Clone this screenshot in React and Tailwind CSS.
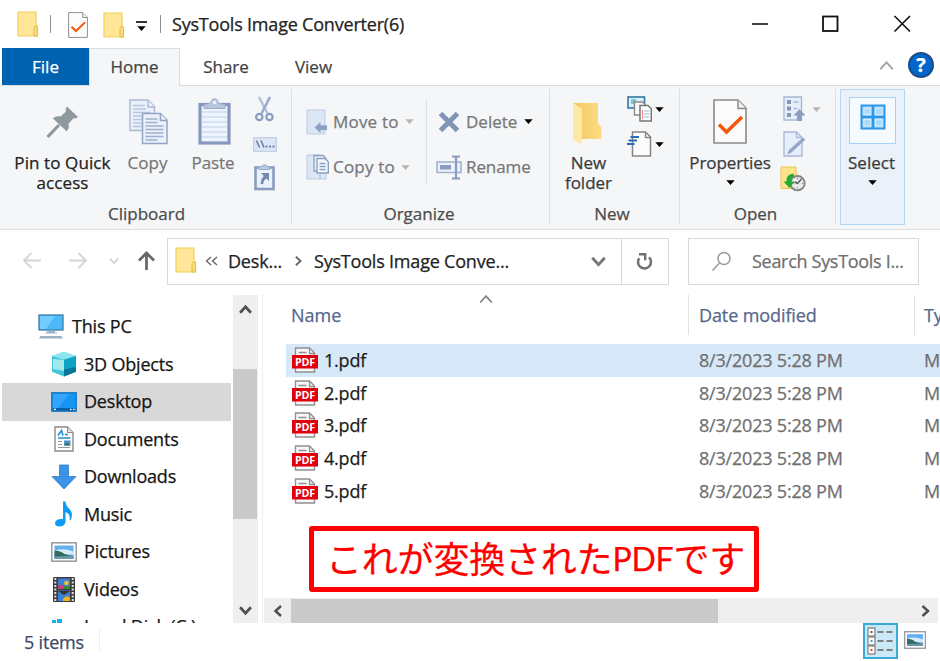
import React from "react";
import clsx from "clsx";

const FolderIcon = ({ className }) => (
    <svg className={clsx("shrink-0", className)} width="22" height="26" viewBox="0 0 22 26">
        <path d="M1 1h18v14h1.500v10H1z" fill="#ffe699" stroke="#f0cd5c" strokeWidth="1.200" />
        <path d="M17 25v-8.500q0-1.500 1.700-1.500t1.800 1.500V25z" fill="#fbdc7c" stroke="#e6bd45" />
    </svg>
);

const CheckPage = ({ className, width, height }) => (
    <svg className={clsx("shrink-0", className)} width={width} height={height} viewBox="0 0 34 45" preserveAspectRatio="none">
        <path d="M1 1h24l8 8v35H1z" fill="#fbfbfb" stroke="#8a8a8a" strokeWidth="1.600" />
        <path d="M25 1v8.500h8" fill="#eee" stroke="#8a8a8a" strokeWidth="1.500" />
        <path d="M6 25.500l7.500 7.500L29 18" fill="none" stroke="#f4560d" strokeWidth="3.400" />
    </svg>
);

const Triangle = ({ className, color = "#000" }) => (
    <svg className={clsx("shrink-0", className)} width="9" height="5" viewBox="0 0 9 5">
        <path d="M.3.300h8.400L4.500 4.900z" fill={color} />
    </svg>
);

const Chevron = ({ dir = "down", color = "#555", width = 2.5, size = 12, className }) => {
    const paths = {
        down: "M1 3l5 5.500L11 3",
        up: "M1 9l5-5.500L11 9",
        left: "M9 1L3.500 6 9 11",
        right: "M3.500 1L9 6l-5.500 5",
    };
    return (
        <svg className={clsx("shrink-0", className)} width={size} height={size} viewBox="0 0 12 12">
            <path d={paths[dir]} fill="none" stroke={color} strokeWidth={width} />
        </svg>
    );
};

const PinIcon = () => (
    <svg width="33" height="33" viewBox="0 0 33 33">
        <path d="M21 .5L32 11l-2.500 1.500-2-.3-5 5.500c.8 3 .2 5.500-2 7.500L7 12.500c2-2 4.500-2.500 7.500-2l5.500-5-.5-2.500z" fill="#8e999e" />
        <path d="M13 19L1.500 31" stroke="#8e999e" strokeWidth="3.200" />
    </svg>
);

const CopyIcon = () => (
    <svg width="39" height="46" viewBox="0 0 39 46">
        <g fill="#eaf1fb" stroke="#a9b8d4" strokeWidth="1.400">
            <path d="M1 1h18l6.500 6.500V31.500H1z" />
            <path d="M19 1v7h6.500" />
        </g>
        <path d="M4 6.500h12M4 10h13M4 13.500h18M4 17h10M4 20.500h9M4 24h9M4 27.500h9" stroke="#b9c8e0" strokeWidth="1.400" />
        <g fill="#eaf1fb" stroke="#94a5c5" strokeWidth="1.500">
            <path d="M13.500 14.500h18l6.500 6.500v23.500H13.500z" />
            <path d="M31.500 14.500V21.500H38" />
        </g>
        <path d="M16.500 20h12M16.500 23.500h12M16.500 27h18M16.500 30.500h18M16.500 34h18M16.500 37.500h18M16.500 41h12" stroke="#9fb0cd" strokeWidth="1.500" />
    </svg>
);

const PasteIcon = () => (
    <svg width="33" height="47" viewBox="0 0 33 47">
        <rect x="2" y="6.500" width="29" height="38.500" fill="#eef4fd" stroke="#8597ba" strokeWidth="3.200" />
        <path d="M4 14h25M4 19h25M4 24h25M4 29h25M4 34h25M4 39h25" stroke="#cfdcf0" strokeWidth="1.500" />
        <path d="M6 10.500V6.500q7-.5 7.500-4Q14 .8 16.500.8t3 1.700q.5 3.500 7.500 4v4z" fill="#b7c5dd" stroke="#9badca" />
        <circle cx="16.500" cy="4.500" r="1.800" fill="#eef4fd" />
    </svg>
);

const ScissorsIcon = () => (
    <svg width="19" height="26" viewBox="0 0 19 26">
        <path d="M4 1l8.500 16.500" stroke="#b4c3dc" strokeWidth="2.600" />
        <path d="M15 1L6.500 17.500" stroke="#9aabc9" strokeWidth="2.600" />
        <circle cx="4.300" cy="21" r="3.200" fill="none" stroke="#8b9dbf" strokeWidth="2.200" />
        <circle cx="14.500" cy="21" r="3.200" fill="none" stroke="#8b9dbf" strokeWidth="2.200" />
    </svg>
);

const CopyPathIcon = () => (
    <svg width="24" height="15" viewBox="0 0 24 15">
        <rect x=".7" y=".7" width="22.600" height="13.600" fill="#dbe6f6" stroke="#b9c8e0" />
        <path d="M3.500 3.500l3 7M8 3.500l3 7" stroke="#6d81a8" strokeWidth="1.600" />
        <path d="M12.500 9.500h2M16 9.500h2M19.500 9.500h2" stroke="#6d81a8" strokeWidth="2" />
    </svg>
);

const ShortcutIcon = () => (
    <svg width="21" height="27" viewBox="0 0 21 27">
        <rect x="1.500" y="3.500" width="18" height="21.500" fill="#eaf1fb" stroke="#8a9cbf" strokeWidth="2.600" />
        <path d="M5 5.500V2.500h3l1-1.500h3l1 1.500h3v3z" fill="#b9c7df" stroke="#9aabc9" />
        <path d="M7 9h8v8l-2.600-2.500q-3 1.500-3.200 5.500H6.700q0-5 3.100-8z" fill="#7488b0" />
    </svg>
);

const MoveToIcon = () => (
    <svg width="22" height="26" viewBox="0 0 22 26">
        <path d="M1 1h18v24H1z" fill="#dce7f6" stroke="#bccbe3" />
        <path d="M16 18h4v7h-4z" fill="#cfdcf0" />
        <path d="M8.500 18.500l6-5.500v3.300H21v4.600h-6.500V24z" fill="#8ea0c2" />
    </svg>
);

const CopyToIcon = () => (
    <svg width="24" height="26" viewBox="0 0 24 26">
        <path d="M1 1h13v24H1zM14 19h6v6h-6z" fill="#dce7f6" stroke="#bccbe3" />
        <path d="M8 1.500h9l3 3V17H8z" fill="#eaf1fb" stroke="#8ea0c2" strokeWidth="1.300" />
        <path d="M11 4.500h8l3.300 3.300V19H11z" fill="#f2f6fd" stroke="#8ea0c2" strokeWidth="1.400" />
        <path d="M13.500 9.500h6M13.500 12.500h6M13.500 15.500h6" stroke="#8ea0c2" strokeWidth="1.300" />
    </svg>
);

const DeleteIcon = () => (
    <svg width="22" height="22" viewBox="0 0 22 22">
        <path d="M2.500 2.500l17 17M19.500 2.500l-17 17" stroke="#8194b8" strokeWidth="5" />
    </svg>
);

const RenameIcon = () => (
    <svg width="26" height="25" viewBox="0 0 26 25">
        <rect x="1" y="7" width="24" height="10.500" fill="#eaf1fb" stroke="#9fb0cd" strokeWidth="1.500" />
        <rect x="4" y="10" width="11" height="4.500" fill="#8a9cbf" />
        <path d="M20 2v21M16 1.500h8M16 23.500h8" stroke="#8a9cbf" strokeWidth="2.200" />
    </svg>
);

const NewFolderIcon = () => (
    <svg width="30" height="43" viewBox="0 0 30 43">
        <defs>
            <linearGradient id="nf" x1="0" x2="1">
                <stop offset="0" stopColor="#eec75c" />
                <stop offset="1" stopColor="#ffdd85" />
            </linearGradient>
        </defs>
        <path d="M0 1h25v20.500l3.500 4V37H8z" fill="url(#nf)" />
        <path d="M0 1l9 5.500v32L7.500 42.500 0 37z" fill="#ffe7a4" />
    </svg>
);

const NewItemIcon = () => (
    <svg width="25" height="26" viewBox="0 0 25 26">
        <rect x="1" y="1" width="16.500" height="11" fill="#d9f1fa" stroke="#3a80a8" strokeWidth="1.700" />
        <path d="M4 3h5v5H4z" fill="#7cc3d6" />
        <path d="M7.500 6h8l3 3v10h-11z" fill="#fafafa" stroke="#8a8a8a" strokeWidth="1.400" />
        <path d="M13 9.500h8l3.300 3.300V25H13z" fill="#fff" stroke="#777" strokeWidth="1.500" />
        <path d="M15.500 14v9" stroke="#f08080" />
        <path d="M17 15h5.500M17 18h5.500M17 21h5.500" stroke="#9db9d9" />
    </svg>
);

const EasyAccessIcon = () => (
    <svg width="25" height="26" viewBox="0 0 25 26">
        <path d="M5.500 1h13l5 5v19h-18z" fill="#fbfbfb" stroke="#858585" strokeWidth="1.500" />
        <path d="M18.500 1v5.500h5" fill="none" stroke="#858585" strokeWidth="1.400" />
        <path d="M3.500 6h8.500M1.500 9.500h8.500M0 13h7.500" stroke="#2a6cb4" strokeWidth="2.100" />
    </svg>
);

const OpenIcon = () => (
    <svg width="23" height="26" viewBox="0 0 23 26">
        <path d="M1 1h17.500v23H1z" fill="#e6eefa" stroke="#a9b8d4" strokeWidth="1.300" />
        <path d="M4 4h4v4H4zM4 10.500h4v4H4zM4 17h4v4H4z" fill="#8597ba" />
        <path d="M10.500 6h5M10.500 12.500h4" stroke="#a9b8d4" strokeWidth="1.500" />
        <path d="M16.500 13l6 6.500h-3.500V25h-5v-5.500h-3.500z" fill="#8b9dc0" />
    </svg>
);

const EditIcon = () => (
    <svg width="23" height="26" viewBox="0 0 23 26">
        <path d="M1 1h12.500l5.500 5.500V25H1z" fill="#e6eefa" stroke="#a9b8d4" strokeWidth="1.300" />
        <path d="M13.500 1v5.500H19" fill="none" stroke="#a9b8d4" strokeWidth="1.300" />
        <path d="M4 23.500l2-4.500L20 6.500l2.500 2L8.500 21.500z" fill="#94a6c8" />
    </svg>
);

const HistoryIcon = () => (
    <svg width="26" height="26" viewBox="0 0 26 26">
        <path d="M1 1h15v6h1v15.500H1z" fill="#ffe48d" stroke="#eac64f" />
        <circle cx="17.500" cy="17.200" r="7.200" fill="#e9e9e9" stroke="#858585" strokeWidth="1.900" />
        <path d="M21.500 13L17.500 17.500 14.500 16" fill="none" stroke="#555" strokeWidth="1.400" />
        <path d="M17.500 12v1M17.500 21.500v1M22 17.500h1M12.500 17.500h1" stroke="#777" />
        <path d="M13.500 7.500Q5.500 8.500 6.500 15.500H3.500L9.500 22l5-6.500h-3.300q0-4.500 3-5z" fill="#21a835" />
    </svg>
);

const SelectIcon = () => (
    <svg width="26" height="26" viewBox="0 0 26 26">
        <rect x="1.500" y="1.500" width="23" height="23" fill="#a9dbfb" stroke="#2f96e8" strokeWidth="2" />
        <path d="M13 1v24M1 13h24" stroke="#2f96e8" strokeWidth="2.600" />
        <path d="M4 4h6.500v6.500H4zM15.500 4H22v6.500h-6.500zM4 15.500h6.500V22H4zM15.500 15.500H22V22h-6.500z" fill="none" stroke="#d4eefe" />
    </svg>
);

const Arrow = ({ dir, color }) => {
    const paths = {
        left: "M19 9.500H2M9.500 2L2 9.500 9.500 17",
        right: "M1 9.500h17M10.500 2l7.500 7.500-7.500 7.500",
        up: "M9.500 19V2M2 9.500L9.500 2 17 9.500",
    };
    return (
        <svg className="shrink-0" width="20" height="20" viewBox="0 0 20 20">
            <path d={paths[dir]} fill="none" stroke={color} strokeWidth={dir === "up" ? 2.700 : 1.900} />
        </svg>
    );
};

const PcIcon = () => (
    <svg width="26" height="25" viewBox="0 0 26 25">
        <rect x="1" y="1" width="24" height="15" fill="#4db8fa" stroke="#3b7ea8" strokeWidth="1.300" />
        <path d="M2 2h15L8 15H2z" fill="#74cbff" />
        <path d="M9 17h8v1.500h2v1H7v-1h2z" fill="#9db4c6" />
        <path d="M2.500 22h21l1.500 2.500H1z" fill="#9fb1c6" />
    </svg>
);

const CubeIcon = () => (
    <svg width="26" height="26" viewBox="0 0 26 26">
        <path d="M13 .5l12 4.300L13 8.500 1 4.800z" fill="#8ce5ef" />
        <path d="M1 4.800l12 3.700v17L1 20.800z" fill="#43c7d6" />
        <path d="M2 8l11 1v11L2 18z" fill="#c4f3f5" opacity=".75" />
        <path d="M25 4.800L13 8.500v17l12-4.700z" fill="#0ea3c5" />
        <path d="M25 16L13 18.500v7l12-4.700z" fill="#087698" />
    </svg>
);

const DesktopIcon = () => (
    <svg width="26" height="20" viewBox="0 0 26 20">
        <rect x=".8" y=".8" width="24.400" height="18.400" fill="#1795f5" stroke="#1273bb" strokeWidth="1.300" />
        <path d="M2 2h16L7 16H2z" fill="#34a5fb" />
        <path d="M2 17.300h22" stroke="#0c5795" strokeWidth="2.200" />
        <path d="M3 17.300h2M19 17.300h1.500M22 17.300h1.500" stroke="#fff" strokeWidth="1.300" />
    </svg>
);

const DocumentIcon = () => (
    <svg width="20" height="26" viewBox="0 0 20 26">
        <path d="M1 1h12.500L19 6.500V25H1z" fill="#fdfdfd" stroke="#8b8b8b" strokeWidth="1.400" />
        <path d="M13.500 1v5.500H19" fill="#ddd" stroke="#8b8b8b" />
        <path d="M4 9.500l3.500-5 1.500 5M11 8.500h3M4 12h12.500" fill="none" stroke="#1e8fdc" strokeWidth="1.600" />
        <path d="M4 15.500h4M4 18.500h4M4 21.500h12" stroke="#999" strokeWidth="1.200" />
        <path d="M10 14.500h6.500v5H10z" fill="#4c8fd0" />
        <path d="M10 19.500l3-3 3.500 3z" fill="#34734b" />
    </svg>
);

const DownloadIcon = () => (
    <svg width="26" height="26" viewBox="0 0 26 26">
        <path d="M8.500 1h9v11.500H25L13 25 1 12.500h7.500z" fill="#3c93e5" stroke="#2c7cc9" strokeWidth=".8" />
    </svg>
);

const MusicIcon = () => (
    <svg width="20" height="26" viewBox="0 0 20 26">
        <path d="M9 .5h2.500Q12 5 15.500 8q4 4 1.500 10.500l-1.500 1q1.500-6.500-4-8.500v9.500q-.5 4.500-5.500 5-5 0-5-3.500 .5-4.500 8-4z" fill="#0c9bf5" />
    </svg>
);

const PictureIcon = ({ width = 26, height = 20 }) => (
    <svg className="shrink-0" width={width} height={height} viewBox="0 0 26 20" preserveAspectRatio="none">
        <rect x=".8" y=".8" width="24.400" height="18.400" fill="#fff" stroke="#999" strokeWidth="1.500" />
        <path d="M3.500 3.500h19v13h-19z" fill="#64b0f2" />
        <path d="M3.500 8.500q9-3 19 1v3h-19z" fill="#d5edfb" />
        <path d="M3.500 8.500q6 0 10 3.500l9 2.500v2h-19z" fill="#356b5e" />
        <path d="M3.500 14.500l19-.5v2.500h-19z" fill="#6f97b0" />
    </svg>
);

const VideoIcon = () => (
    <svg width="22" height="25" viewBox="0 0 22 25">
        <rect width="22" height="25" rx="1" fill="#3c3c3c" />
        <path d="M2.300 1v23M19.700 1v23" stroke="#e2e2e2" strokeWidth="2" strokeDasharray="2 1.500" />
        <path d="M5 1.500h12v10.500H5zM5 13.500h12V24H5z" fill="#3b7fd9" />
        <path d="M5 9q4-3 6 0v3H5z" fill="#c6407d" />
        <circle cx="13.500" cy="6" r="2.300" fill="#f5c518" />
        <path d="M10.500 9h6.500v3h-6.500z" fill="#2f8a35" />
        <path d="M10 22q3.500-5 7-1v3h-7z" fill="#f0b51c" />
        <path d="M5 14h12l-6 4z" fill="#34322b" />
    </svg>
);

const DiskIcon = () => (
    <svg width="26" height="26" viewBox="0 0 26 26">
        <path d="M1 6h4v4H1zM6 5h5v5H6z" fill="#12aef0" />
        <rect x="1" y="13" width="24" height="8" fill="#b5b5b5" />
    </svg>
);

const PdfIcon = () => (
    <svg className="mb-px shrink-0" width="26" height="26" viewBox="0 0 26 26">
        <path d="M3.500 1h14l5 5v19h-19z" fill="#f7f7f7" stroke="#909090" strokeWidth="1.400" />
        <path d="M17.500 1v5.500h5M6.500 5.500h8" fill="none" stroke="#909090" strokeWidth="1.300" />
        <rect x="0" y="8" width="26" height="13.500" fill="#e2000f" />
        <text x="13" y="18.800" textAnchor="middle" fontSize="11" fontWeight="700" fontFamily="Open Sans, sans-serif" fill="#fff" textLength="20" lengthAdjust="spacingAndGlyphs">PDF</text>
    </svg>
);

const DetailsIcon = () => (
    <svg width="27" height="28" viewBox="0 0 27 28">
        <path d="M1 1h7v8H1zM1 10h7v8H1zM1 19h7v8H1z" fill="#fff" stroke="#8f8f8f" strokeWidth="1.400" />
        <path d="M3.500 5h2" stroke="#555" strokeWidth="2" />
        <path d="M3.500 14h2" stroke="#3d9be0" strokeWidth="2" />
        <path d="M3.500 23h2" stroke="#e2402f" strokeWidth="2" />
        <path d="M10.500 5h6M19.500 5h6M10.500 14h6M19.500 14h6M10.500 23h6M19.500 23h6" stroke="#808080" strokeWidth="2" />
    </svg>
);

const sidebarItems = [
    { label: "3D Objects", icon: <CubeIcon /> },
    { label: "Desktop", icon: <DesktopIcon />, active: true },
    { label: "Documents", icon: <DocumentIcon /> },
    { label: "Downloads", icon: <DownloadIcon /> },
    { label: "Music", icon: <MusicIcon /> },
    { label: "Pictures", icon: <PictureIcon /> },
    { label: "Videos", icon: <VideoIcon /> },
    { label: "Local Disk (C:)", icon: <DiskIcon /> },
];

const files = ["1.pdf", "2.pdf", "3.pdf", "4.pdf", "5.pdf"];

const TitleBar = () => (
    <div className="flex h-12 items-center pl-[17px]">
        <FolderIcon />
        <div className="ml-[11px] h-[18px] w-px bg-[#8f8f8f]" />
        <CheckPage width={20} height={26} className="ml-[17px] mt-0.5" />
        <FolderIcon className="ml-[15px] mt-0.5" />
        <div className="ml-[11px] mt-1 flex flex-col items-center gap-[3px]">
            <div className="h-[2px] w-[11px] bg-[#333]" />
            <Triangle />
        </div>
        <div className="ml-[13px] h-[18px] w-px bg-[#8f8f8f]" />
        <h1 className="ml-[11px] text-[18px] tracking-[-0.2px] text-[#222]">SysTools Image Converter(6)</h1>
        <svg className="ml-auto mr-[29px]" width="160" height="18" viewBox="0 0 160 18">
            <path d="M1 9h16" stroke="#111" strokeWidth="1.600" />
            <rect x="72" y="1.500" width="14.500" height="14.500" fill="none" stroke="#111" strokeWidth="1.800" />
            <path d="M143.500 1l15.500 15.500M159 1l-15.500 15.500" stroke="#111" strokeWidth="1.600" />
        </svg>
    </div>
);

const Tabs = () => (
    <div className="flex h-[37px] items-stretch pl-[2px] text-[17px] leading-[38px] text-[#444]">
        <div className="w-[87px] bg-[#0063b1] text-center text-white">File</div>
        <div className="z-10 -mb-px w-[91px] border border-b-0 border-[#dcdde0] bg-[#f5f6f8] text-center leading-[36px]">Home</div>
        <div className="w-[92px] text-center">Share</div>
        <div className="w-[83px] text-center">View</div>
        <div className="mb-[3px] ml-auto mr-[6px] flex items-center">
            <Chevron dir="up" color="#a5a5a5" width={1.5} size={15} className="mr-[14px]" />
            <div className="flex h-[26px] w-[26px] items-center justify-center rounded-full border-2 border-[#1a4b86] bg-[#0066cc] text-[20px] font-bold leading-none text-white">?</div>
        </div>
    </div>
);

const Group = ({ name, className, children }) => (
    <div className={clsx("flex h-[135px] shrink-0 flex-col border-r border-[#dfe0e3]", className)}>
        <div className="flex h-[115px]">{children}</div>
        <div className="text-center leading-5 text-[#4b4b4b]">{name}</div>
    </div>
);

const Ribbon = () => (
    <div className="flex h-[145px] border-y border-[#dcdde0] bg-[#f5f6f8] pl-[2px] pt-[3px] text-[17px] leading-5 text-[#3b3b3b]">
        <Group name="Clipboard" className="w-[290px]">
            <div className="flex w-[121px] flex-col items-center text-center tracking-[0.1px] text-[#222]">
                <div className="mt-[17px] h-[47px]"><PinIcon /></div>
                Pin to Quick<br />access
            </div>
            <div className="flex w-[49px] flex-col items-center text-[#777]">
                <div className="mt-[10px] h-[54px] pl-[2px]"><CopyIcon /></div>
                Copy
            </div>
            <div className="ml-[16px] flex w-[50px] flex-col items-center text-[#777]">
                <div className="mt-[9px] h-[55px] pl-[2px]"><PasteIcon /></div>
                <span className="tracking-[-0.1px]">Paste</span>
            </div>
            <div className="ml-[14px] mt-[7px] flex w-[25px] flex-col items-center">
                <div className="h-[41px]"><ScissorsIcon /></div>
                <div className="h-[27px]"><CopyPathIcon /></div>
                <ShortcutIcon />
            </div>
        </Group>
        <Group name={<span className="mr-[3px]">Organize</span>} className="w-[258px]">
            <div className="mt-[10px] flex h-[86px] w-[135px] flex-col border-r border-[#dfe0e3] pl-[14px] text-[#777]">
                <div className="flex h-[45px] shrink-0 items-center">
                    <MoveToIcon /><span className="ml-[5px] tracking-[0.2px]">Move to</span>
                    <Triangle color="#b5b5b5" className="ml-[6px]" />
                </div>
                <div className="flex h-[46px] shrink-0 items-center">
                    <CopyToIcon /><span className="ml-[3px] tracking-[0.2px]">Copy to</span>
                    <Triangle color="#b5b5b5" className="ml-[6px]" />
                </div>
            </div>
            <div className="mt-[10px] pl-[9px] text-[#777]">
                <div className="flex h-[45px] items-center">
                    <div className="w-[30px] pl-[2px]"><DeleteIcon /></div>
                    <span>Delete</span>
                    <Triangle className="ml-[7px]" />
                </div>
                <div className="flex h-[46px] items-center">
                    <div className="w-[30px]"><RenameIcon /></div>
                    <span className="tracking-[-0.1px]">Rename</span>
                </div>
            </div>
        </Group>
        <Group name={<span className="mr-[5px]">New</span>} className="w-[130px]">
            <div className="flex w-[77px] flex-col items-center text-center">
                <div className="mt-[13px] h-[51px] pr-[2px]"><NewFolderIcon /></div>
                New<br />folder
            </div>
            <div className="mt-[7px] flex flex-col gap-[9px]">
                <div className="flex items-center gap-[3px]"><NewItemIcon /><Triangle /></div>
                <div className="flex items-center gap-[3px]"><EasyAccessIcon /><Triangle /></div>
            </div>
        </Group>
        <Group name={<span className="mr-[4px]">Open</span>} className="w-[156px]">
            <div className="flex w-[100px] flex-col items-center">
                <div className="mt-[10px] h-[54px]"><CheckPage width={34} height={45} /></div>
                <span className="tracking-[-0.1px]">Properties</span>
                <Triangle className="mt-[7px]" />
            </div>
            <div className="mt-[7px] flex flex-col gap-[9px]">
                <div className="flex items-center gap-[6px] pl-[3px]"><OpenIcon /><Triangle color="#b5b5b5" /></div>
                <div className="pl-[3px]"><EditIcon /></div>
                <HistoryIcon />
            </div>
        </Group>
        <div className="ml-[4px] flex h-[136px] w-[65px] flex-col items-center border border-[#b3d8f5] bg-[#eaf1f8]">
            <div className="mt-[7px] flex h-[47px] w-[47px] items-center justify-center border border-[#a8d2f5] bg-[#f5faff] pb-[8px]"><SelectIcon /></div>
            <span className="mr-[2px] mt-[9px]">Select</span>
            <Triangle className="mr-[1px] mt-[7px]" />
        </div>
    </div>
);

const AddressBar = () => (
    <div className="flex h-[65px] items-center pb-[3px] pl-[22px] text-[18px] tracking-[-0.2px] text-[#222]">
        <Arrow dir="left" color="#d5d5d5" />
        <div className="w-[26px]" />
        <Arrow dir="right" color="#d5d5d5" />
        <Chevron color="#cfcfcf" width={2} size={10} className="ml-[21px]" />
        <div className="w-[18px]" />
        <Arrow dir="up" color="#666" />
        <div className="ml-[10px] flex h-[47px] w-[502px] items-center border border-[#d9d9d9]">
            <FolderIcon className="mb-[3px] ml-[7px]" />
            <svg className="ml-[8px]" width="13" height="10" viewBox="0 0 13 10">
                <path d="M6 1L1.500 5 6 9M12 1L7.500 5 12 9" fill="none" stroke="#666" strokeWidth="1.400" />
            </svg>
            <span className="ml-[10px]">Desk...</span>
            <Chevron dir="right" color="#666" width={2.3} size={10} className="ml-[11px]" />
            <span className="ml-[11px]">SysTools Image Conve...</span>
            <Chevron color="#777" width={2.3} size={15} className="ml-auto mr-[15px]" />
            <div className="flex h-full w-[47px] items-center justify-center border-l border-[#d9d9d9]">
                <svg width="18" height="19" viewBox="0 0 18 19">
                    <path d="M3.200 6.200A6.500 6.500 0 1 0 13 5.300" fill="none" stroke="#707070" strokeWidth="2.500" />
                    <path d="M3 2.200h6.200v6" fill="none" stroke="#707070" strokeWidth="2.400" />
                </svg>
            </div>
        </div>
        <div className="ml-[19px] flex h-[47px] w-[231px] items-center border border-[#d9d9d9] text-[#6f6f6f]">
            <svg className="ml-[22px]" width="21" height="21" viewBox="0 0 21 21">
                <circle cx="13" cy="7.500" r="6" fill="none" stroke="#999" strokeWidth="1.500" />
                <path d="M8.500 12L1.500 19.500" stroke="#999" strokeWidth="1.500" />
            </svg>
            <span className="ml-[20px] tracking-[-0.3px]">Search SysTools I...</span>
        </div>
    </div>
);

const Sidebar = () => (
    <div className="flex h-[328px] w-[263px] shrink-0 border-r border-[#f0f0f0] pl-[2px] text-[18px] tracking-[-0.2px] text-[#151515]">
        <div className="h-[328px] w-[229px] overflow-hidden pt-[13px]">
            <div className="flex h-[37.500px] items-center pl-[36px]">
                <PcIcon /><span className="ml-[8px]">This PC</span>
            </div>
            {sidebarItems.map((item) => (
                <div key={item.label} className={clsx("flex h-[37.500px] items-center pl-[49px]", item.active && "bg-[#d8d8d8]")}>
                    <div className="flex w-[26px] justify-center">{item.icon}</div>
                    <span className="ml-[7px]">{item.label}</span>
                </div>
            ))}
        </div>
        <div className="ml-[2px] flex w-[25px] flex-col bg-[#efefef]">
            <div className="flex h-[74px] justify-center pt-[8px]"><Chevron dir="up" color="#505050" size={13} /></div>
            <div className="h-[150px] w-[24px] bg-[#cacaca]" />
            <div className="mt-auto flex justify-center pb-[6px]"><Chevron color="#505050" size={13} /></div>
        </div>
    </div>
);

const FileList = () => (
    <div className="relative flex min-w-0 flex-1 flex-col overflow-hidden text-[18px] tracking-[-0.2px]">
        <Chevron dir="up" color="#808080" width={1.4} size={14} className="absolute left-[216px] top-[-3px]" />
        <div className="flex h-[40px] shrink-0 text-[#56688c] leading-[41px]">
            <div className="w-[426px] shrink-0 border-r border-[#e2e2e2] pl-[28px] tracking-normal">Name</div>
            <div className="w-[226px] shrink-0 border-r border-[#e2e2e2] pl-[10px] tracking-[-0.1px]">Date modified</div>
            <div className="shrink-0 pl-[9px]">Type</div>
        </div>
        <div className="ml-[23px] mt-[9px]">
            {files.map((name, i) => (
                <div key={name} className={clsx("flex h-[32.800px] items-center whitespace-nowrap pl-[6px]", i === 0 && "bg-[#d7e8f8]")}>
                    <PdfIcon />
                    <span className="ml-[6px] w-[375px] shrink-0 text-[#1c1c1c]">{name}</span>
                    <span className="w-[225px] shrink-0 text-[#6f6f6f]">8/3/2023 5:28 PM</span>
                    <span className="shrink-0 text-[#6f6f6f]">M</span>
                </div>
            ))}
        </div>
        <div className="mt-auto ml-[1px] mr-[2px] flex h-[25px] items-center bg-[#efefef]">
            <div className="flex w-[27px] justify-center"><Chevron dir="left" color="#505050" size={12} /></div>
            <div className="h-[24px] w-[427px] bg-[#cacaca]" />
            <Chevron dir="right" color="#505050" size={12} className="ml-auto mr-[7px]" />
        </div>
        <div className="absolute left-[46px] top-[231px] flex h-[66px] w-[450px] items-center whitespace-nowrap rounded-[3px] border-[5px] border-[#ff0000] pl-[12px] font-['Lato','Noto_Sans_CJK_JP',sans-serif] text-[36px] leading-none tracking-[-0.2px] text-[#ff0000]">
            これが変換された<span className="text-[32px]">PDF</span>です
        </div>
    </div>
);

const StatusBar = () => (
    <div className="flex h-[38px] items-start pl-[24px] text-[18px] tracking-[-0.2px] text-[#3b4a6b]">
        <span className="leading-[38px]">5 items</span>
        <div className="ml-[15px] mt-[7px] h-[20px] w-px bg-[#eee]" />
        <div className="ml-auto flex h-[36px] w-[35px] items-center justify-center border-2 border-[#3ba9d8] bg-[#cbe8f6]"><DetailsIcon /></div>
        <div className="ml-[6px] mr-[14px] mt-[8px]"><PictureIcon width={22} height={18} /></div>
    </div>
);

export default function App() {
    return (
        <div className="flex h-[661px] w-[940px] flex-col overflow-hidden bg-white font-['Open_Sans','Noto_Sans_CJK_JP',sans-serif] [-webkit-text-stroke:0.25px]">
            <TitleBar />
            <Tabs />
            <Ribbon />
            <AddressBar />
            <div className="flex h-[328px]">
                <Sidebar />
                <FileList />
            </div>
            <StatusBar />
        </div>
    );
}
